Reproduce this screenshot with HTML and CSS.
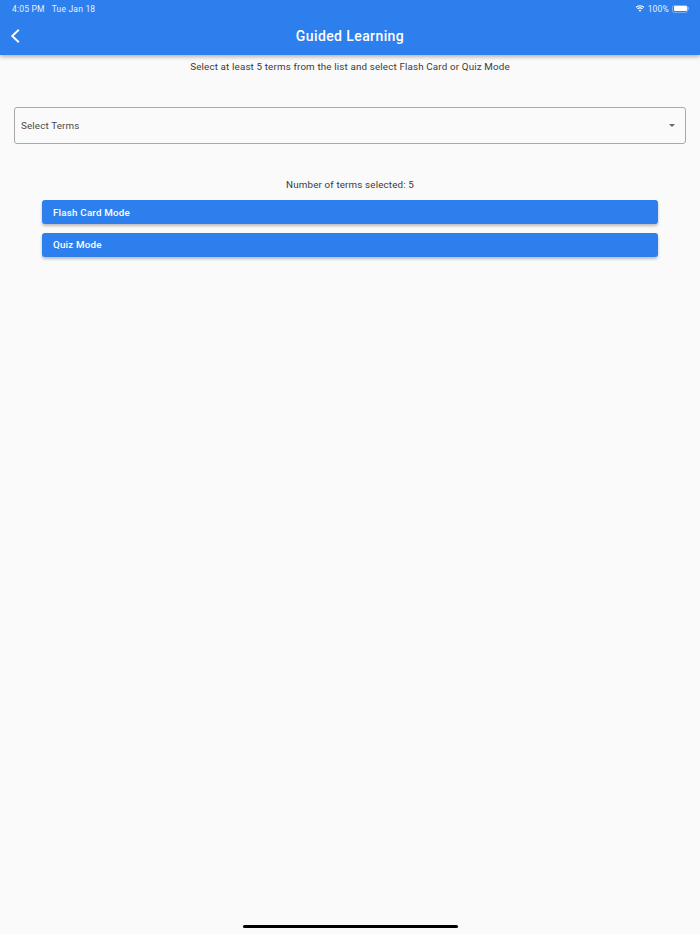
FILE: index.html
```html
<!DOCTYPE html>
<html lang="en">
<head>
<meta charset="utf-8">
<title>Guided Learning</title>
<link rel="stylesheet" href="styles.css">
</head>
<body>
<div class="screen">
  <header class="appbar">
    <div class="statusbar">
      <div class="status-left"><span>4:05 PM</span><span>Tue Jan 18</span></div>
      <div class="status-right">
        <svg class="wifi" width="10" height="7" viewBox="0 0 11 8"><path d="M5.500 1.600c1.600 0 3 .6 4.100 1.600l.8-.9C9.100 1.100 7.400.3 5.500.3S1.900 1.100.6 2.300l.8.900c1.100-1 2.500-1.600 4.100-1.600z" fill="#fff"/><path d="M5.500 3.900c.9 0 1.800.4 2.400 1l.9-.9C7.900 3.100 6.800 2.600 5.500 2.600S3.100 3.100 2.200 4l.9.900c.6-.6 1.500-1 2.400-1z" fill="#fff"/><path d="M5.500 7.800 7.100 6.100c-.4-.4-1-.7-1.600-.7s-1.200.3-1.600.7z" fill="#fff"/></svg>
        <span>100%</span>
        <span class="battery"><span class="battery-fill"></span></span>
        <span class="battery-cap"></span>
      </div>
    </div>
    <div class="toolbar">
      <svg class="back" width="12" height="16" viewBox="0 0 12 16"><path d="M9.800 1.700 3.200 8l6.600 6.300" fill="none" stroke="#fff" stroke-width="1.900"/></svg>
      <h1 class="title">Guided Learning</h1>
    </div>
  </header>
  <main class="content">
    <p class="hint">Select at least 5 terms from the list and select Flash Card or Quiz Mode</p>
    <div class="select">
      <span>Select Terms</span>
      <span class="caret"></span>
    </div>
    <p class="count">Number of terms selected: 5</p>
    <div class="actions">
      <button class="btn">Flash Card Mode</button>
      <button class="btn">Quiz Mode</button>
    </div>
  </main>
  <div class="home-indicator"></div>
</div>
</body>
</html>
```
FILE: styles.css
```css
* { box-sizing: border-box; }
html, body { margin: 0; padding: 0; }
body {
  width: 700px;
  height: 934px;
  overflow: hidden;
  background: #fafafa;
  font-family: Roboto, "Liberation Sans", sans-serif;
}
.screen {
  position: relative;
  width: 700px;
  height: 934px;
}
.appbar {
  height: 55px;
  background: #2c7fed;
  color: #fff;
  box-shadow: 0 2px 4px rgba(0,0,0,.28);
}
.statusbar {
  height: 17px;
  display: flex;
  justify-content: space-between;
  align-items: center;
  padding: 0 11px 0 12px;
  font-size: 8.500px;
  letter-spacing: .2px;
  color: #e6f0fd;
}
.status-left { display: flex; gap: 7px; }
.status-right { display: flex; align-items: center; gap: 3px; }
.wifi { display: block; }
.battery {
  display: block;
  width: 16px;
  height: 8px;
  border: 1px solid rgba(255,255,255,.35);
  border-radius: 2.500px;
  padding: .5px;
}
.battery-fill {
  display: block;
  height: 100%;
  background: #fff;
  border-radius: 1px;
}
.battery-cap {
  width: 1px;
  height: 3px;
  margin-left: -3px;
  background: rgba(255,255,255,.35);
}
.toolbar {
  height: 38px;
  display: flex;
  align-items: center;
  justify-content: center;
  position: relative;
}
.back { position: absolute; left: 9px; top: 11px; }
.title {
  margin: 0;
  font-size: 14px;
  font-weight: 500;
  letter-spacing: .4px;
  color: #fff;
}
.content {
  display: flex;
  flex-direction: column;
  align-items: stretch;
  padding: 0 14px;
}
.hint, .count {
  margin: 0;
  text-align: center;
  font-size: 9.800px;
  line-height: 14px;
  letter-spacing: .15px;
  color: #3a3a3a;
}
.hint { margin-top: 5px; }
.select {
  height: 37px;
  margin-top: 33px;
  display: flex;
  justify-content: space-between;
  align-items: center;
  padding: 0 10px 0 6px;
  border: 1px solid #a9a9a9;
  border-radius: 3px;
  font-size: 9.800px;
  letter-spacing: .15px;
  color: #4a4a4a;
}
.caret {
  width: 0;
  height: 0;
  border-left: 3.500px solid transparent;
  border-right: 3.500px solid transparent;
  border-top: 3.500px solid #666;
}
.count { margin-top: 34px; }
.actions {
  display: flex;
  flex-direction: column;
  gap: 8.500px;
  margin: 8px 28px 0;
}
.btn {
  height: 24px;
  padding: 0 11px;
  border: 0;
  border-radius: 3px;
  background: #2c7fed;
  box-shadow: 0 2px 3px rgba(0,0,0,.25);
  color: #fff;
  font-family: inherit;
  font-size: 9.800px;
  font-weight: 500;
  letter-spacing: .2px;
  text-align: left;
}
.home-indicator {
  position: absolute;
  left: 243px;
  bottom: 6px;
  width: 215px;
  height: 3px;
  border-radius: 2px;
  background: #000;
}
```
